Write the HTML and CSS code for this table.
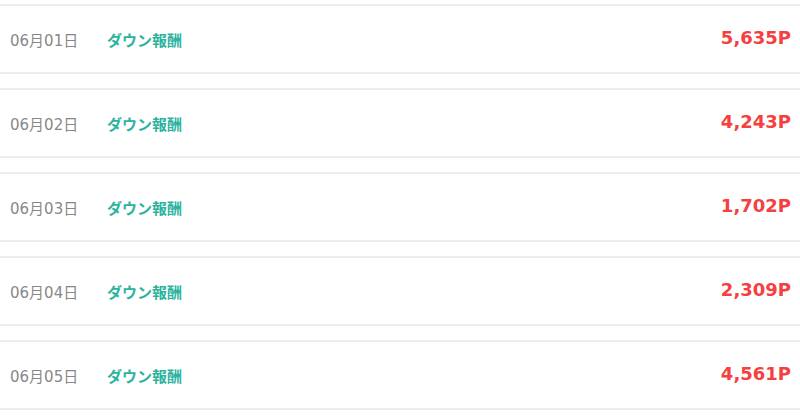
FILE: index.html
```html
<!DOCTYPE html>
<html lang="ja">
<head>
<meta charset="utf-8">
<link rel="stylesheet" href="styles.css">
</head>
<body>
<ul class="list">
  <li class="row"><span class="date">06月01日</span><span class="label">ダウン報酬</span><span class="amount">5,635P</span></li>
  <li class="row"><span class="date">06月02日</span><span class="label">ダウン報酬</span><span class="amount">4,243P</span></li>
  <li class="row"><span class="date">06月03日</span><span class="label">ダウン報酬</span><span class="amount">1,702P</span></li>
  <li class="row"><span class="date">06月04日</span><span class="label">ダウン報酬</span><span class="amount">2,309P</span></li>
  <li class="row"><span class="date">06月05日</span><span class="label">ダウン報酬</span><span class="amount">4,561P</span></li>
</ul>
</body>
</html>
```
FILE: styles.css
```css
html, body {
  margin: 0;
  padding: 0;
  background: #ffffff;
}
.list {
  list-style: none;
  margin: 0;
  padding: 4px 0 0;
  display: flex;
  flex-direction: column;
  gap: 14px;
}
.row {
  height: 66px;
  border-top: 2px solid #ececec;
  border-bottom: 2px solid #ececec;
  display: flex;
  align-items: center;
  padding: 0 9px 0 10px;
  background: #fff;
}
.date {
  width: 97px;
  font-family: "DejaVu Sans", "Noto Sans CJK JP", sans-serif;
  font-size: 15px;
  color: #888888;
}
.label {
  font-family: "Noto Sans CJK JP", sans-serif;
  font-weight: 700;
  font-size: 15px;
  color: #2bb3a0;
}
.amount {
  margin-left: auto;
  margin-bottom: 3px;
  font-family: "DejaVu Sans", sans-serif;
  font-weight: 700;
  font-size: 18px;
  color: #f5403f;
}
```
